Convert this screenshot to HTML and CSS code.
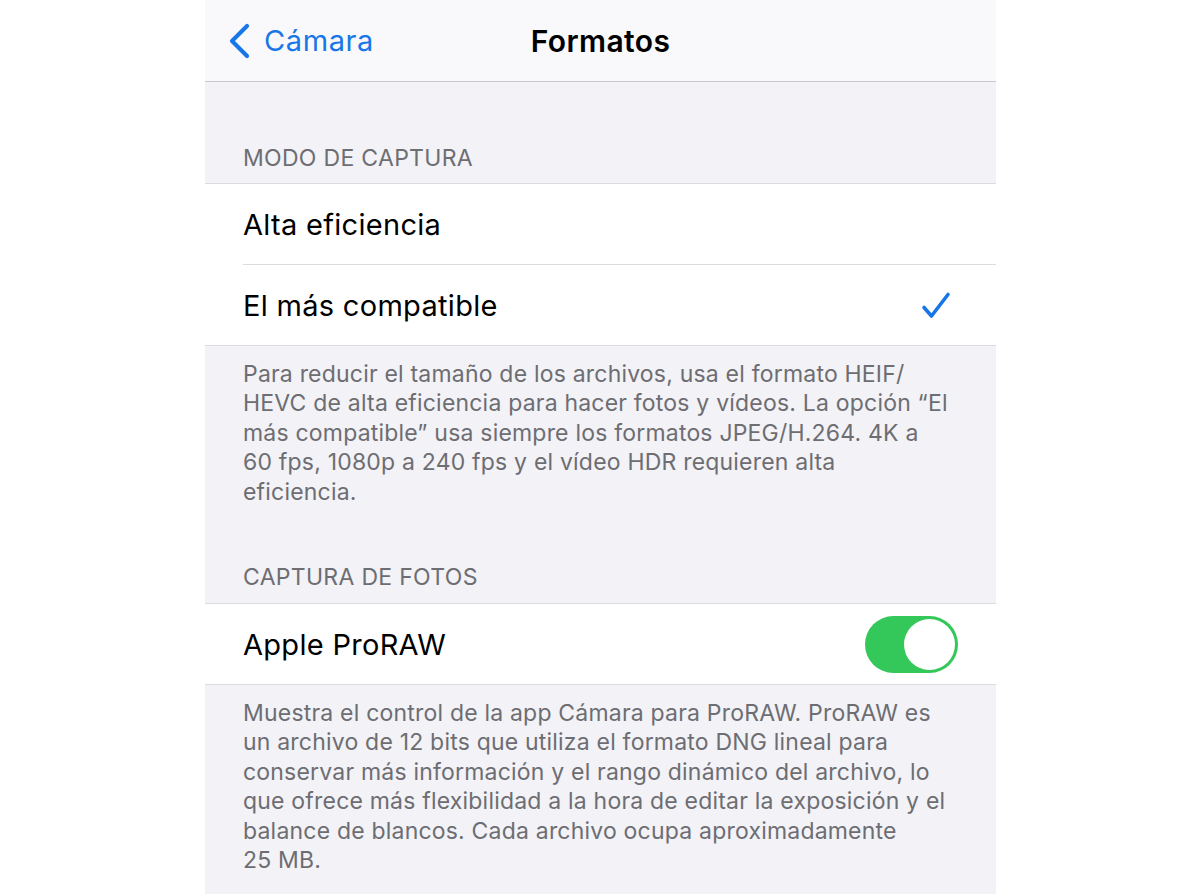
FILE: index.html
```html
<!DOCTYPE html>
<html lang="es">
<head>
<meta charset="utf-8">
<title>Formatos</title>
<link rel="stylesheet" href="styles.css">
</head>
<body>
<div class="screen">
  <header class="nav">
    <a class="back">
      <svg class="chevron" width="24" height="36" viewBox="0 0 24 36"><path d="M20 3 L5 18 L20 33" fill="none" stroke="currentColor" stroke-width="4.2" stroke-linecap="round" stroke-linejoin="round"/></svg>
      <span class="back-label">Cámara</span>
    </a>
    <h1 class="title">Formatos</h1>
  </header>

  <div class="section-header first">MODO DE CAPTURA</div>
  <div class="group">
    <div class="row">
      <span class="row-label">Alta eficiencia</span>
    </div>
    <div class="row">
      <span class="row-label">El más compatible</span>
      <svg class="check" width="30" height="29" viewBox="0 0 30 29"><path d="M3 16.5 L10.5 25 L27 3.5" fill="none" stroke="currentColor" stroke-width="3.6" stroke-linecap="round" stroke-linejoin="round"/></svg>
    </div>
  </div>
  <p class="section-footer">Para reducir el tamaño de los archivos, usa el formato HEIF/<br>HEVC de alta eficiencia para hacer fotos y vídeos. La opción “El<br>más compatible” usa siempre los formatos JPEG/H.264. 4K a<br>60 fps, 1080p a 240 fps y el vídeo HDR requieren alta<br>eficiencia.</p>

  <div class="section-header">CAPTURA DE FOTOS</div>
  <div class="group">
    <div class="row">
      <span class="row-label">Apple ProRAW</span>
      <span class="toggle on"><span class="knob"></span></span>
    </div>
  </div>
  <p class="section-footer">Muestra el control de la app Cámara para ProRAW. ProRAW es<br>un archivo de 12 bits que utiliza el formato DNG lineal para<br>conservar más información y el rango dinámico del archivo, lo<br>que ofrece más flexibilidad a la hora de editar la exposición y el<br>balance de blancos. Cada archivo ocupa aproximadamente<br>25 MB.</p>
</div>
</body>
</html>
```
FILE: styles.css
```css
html, body {
  margin: 0;
  padding: 0;
  background: #ffffff;
}

body {
  font-family: Inter, "Noto Sans", "Liberation Sans", sans-serif;
  -webkit-font-smoothing: antialiased;
}

.screen {
  width: 791px;
  height: 894px;
  margin: 0 0 0 205px;
  background: #f2f2f7;
  overflow: hidden;
}

.nav {
  height: 81px;
  background: #f9f9fb;
  border-bottom: 1px solid #c8c8cc;
  display: flex;
  align-items: center;
  position: relative;
}

.back {
  display: flex;
  align-items: center;
  color: #1877e8;
  padding-left: 22px;
}

.chevron {
  display: block;
}

.back-label {
  font-size: 29px;
  margin-left: 13px;
  letter-spacing: 0.6px;
}

.title {
  position: absolute;
  left: 0;
  right: 0;
  top: 0;
  bottom: 0;
  margin: 0;
  display: flex;
  align-items: center;
  justify-content: center;
  font-size: 30px;
  font-weight: 600;
  letter-spacing: 0.4px;
  color: #000;
  pointer-events: none;
}

.section-header {
  height: 96px;
  box-sizing: border-box;
  padding: 0 38px 12px;
  display: flex;
  align-items: flex-end;
  font-size: 23px;
  line-height: 28px;
  color: #6d6d72;
  letter-spacing: 0.3px;
}

.section-header.first {
  height: 101px;
  padding-bottom: 11px;
}

.group {
  background: #ffffff;
  border-top: 1px solid #dcdce0;
  border-bottom: 1px solid #dcdce0;
}

.row {
  height: 80px;
  margin-left: 38px;
  padding-right: 38px;
  display: flex;
  align-items: center;
  justify-content: space-between;
}

.row + .row {
  border-top: 1px solid #dcdce0;
}

.row-label {
  font-size: 29px;
  letter-spacing: 0.3px;
  color: #000;
}

.check {
  color: #1877e8;
  margin-right: 7px;
}

.toggle {
  width: 93px;
  height: 57px;
  border-radius: 29px;
  background: #34c759;
  position: relative;
  box-sizing: border-box;
}

.knob {
  position: absolute;
  top: 3px;
  right: 3px;
  width: 51px;
  height: 51px;
  border-radius: 50%;
  background: #ffffff;
}

.section-footer {
  margin: 0;
  padding: 14px 38px 0;
  font-size: 23px;
  line-height: 29.4px;
  letter-spacing: 0.2px;
  color: #6d6d72;
}
```
